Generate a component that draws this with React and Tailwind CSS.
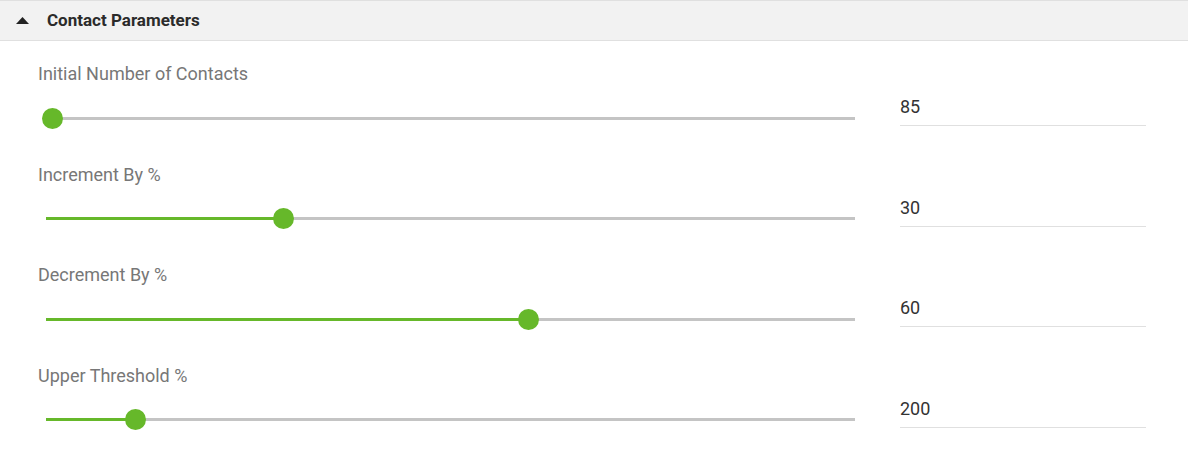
const rows = [
  { label: "Initial Number of Contacts", value: "85", pos: 52 },
  { label: "Increment By %", value: "30", pos: 283 },
  { label: "Decrement By %", value: "60", pos: 528 },
  { label: "Upper Threshold %", value: "200", pos: 135 },
];

// track starts at x=46 on the page
const TRACK_START = 46;

const Slider = ({ pos }) => {
  const filled = pos - TRACK_START;
  return (
    <div className="flex items-center h-[40px] w-[809px]">
      <div className="h-[3px] bg-[#66b82a]" style={{ width: filled }} />
      <div className="relative z-10 shrink-0 h-[21px] w-[21px] -mx-[10.5px] rounded-full bg-[#66b82a]" />
      <div className="flex-1 h-[3px] bg-[#c4c4c4]" />
    </div>
  );
};

const App = () => {
  return (
    <div
      className="w-[1188px] h-[469px] bg-white overflow-hidden"
      style={{ fontFamily: "Roboto, 'Liberation Sans', sans-serif" }}
    >
      {/* Header */}
      <div className="flex items-center h-[41px] bg-[#f2f2f2] border-y border-[#e0e0e0]">
        <svg width="13" height="7" viewBox="0 0 13 7" className="ml-[16px]">
          <polygon points="6.5,0 13,7 0,7" fill="#222" />
        </svg>
        <span className="ml-[18px] text-[17px] font-bold text-[#2b2b2b]">
          Contact Parameters
        </span>
      </div>

      {/* Rows */}
      <div className="pl-[38px] pt-[22px]">
        {rows.map((r) => (
          <div key={r.label} className="h-[100.5px]">
            <div className="text-[18px] leading-[22px] text-[#777]">{r.label}</div>
            <div className="flex items-start mt-[13px]">
              <div className="pl-[8px]">
                <Slider pos={r.pos} />
              </div>
              <div className="ml-[45px] w-[246px] h-[30px] -mt-[2px] border-b border-[#e0e0e0] text-[18px] leading-[22px] text-[#333]">
                {r.value}
              </div>
            </div>
          </div>
        ))}
      </div>
    </div>
  );
};

export default App;
